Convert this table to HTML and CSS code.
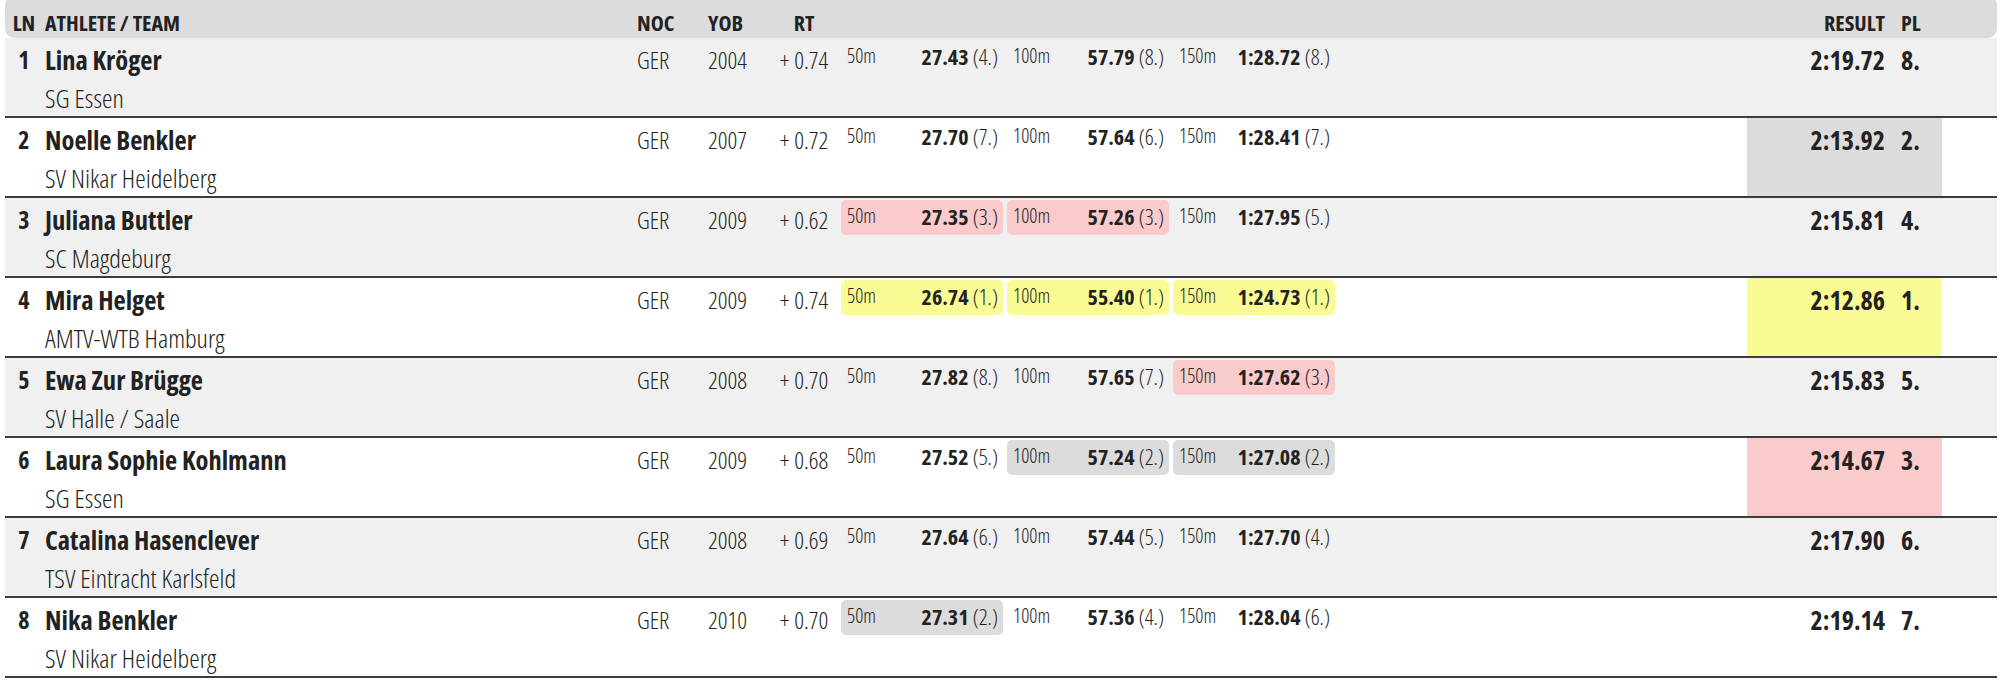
FILE: index.html
```html
<!DOCTYPE html>
<html lang="en">
<head>
    <meta charset="UTF-8">
    <meta name="viewport" content="width=device-width, initial-scale=1.0">
    <title>200m Results</title>
    <link rel="stylesheet" href="styles.css">
</head>
<body>
<div class="results">
    <div class="row head">
        <div class="ln">LN</div>
        <div class="athlete">ATHLETE / TEAM</div>
        <div class="noc">NOC</div>
        <div class="yob">YOB</div>
        <div class="rt">RT</div>
        <div class="splits"></div>
        <div></div>
        <div class="final"><span class="result">RESULT</span><span class="pl">PL</span></div>
    </div>

    <div class="row odd">
        <div class="ln">1</div>
        <div class="athlete"><div class="name">Lina Kröger</div><div class="team">SG Essen</div></div>
        <div class="noc">GER</div>
        <div class="yob">2004</div>
        <div class="rt">+ 0.74</div>
        <div class="splits">
            <div class="split"><span class="dist">50m</span><span><b>27.43</b> (4.)</span></div>
            <div class="split"><span class="dist">100m</span><span><b>57.79</b> (8.)</span></div>
            <div class="split"><span class="dist">150m</span><span><b>1:28.72</b> (8.)</span></div>
        </div>
        <div></div>
        <div class="final"><span class="result">2:19.72</span><span class="pl">8.</span></div>
    </div>

    <div class="row">
        <div class="ln">2</div>
        <div class="athlete"><div class="name">Noelle Benkler</div><div class="team">SV Nikar Heidelberg</div></div>
        <div class="noc">GER</div>
        <div class="yob">2007</div>
        <div class="rt">+ 0.72</div>
        <div class="splits">
            <div class="split"><span class="dist">50m</span><span><b>27.70</b> (7.)</span></div>
            <div class="split"><span class="dist">100m</span><span><b>57.64</b> (6.)</span></div>
            <div class="split"><span class="dist">150m</span><span><b>1:28.41</b> (7.)</span></div>
        </div>
        <div></div>
        <div class="final silver"><span class="result">2:13.92</span><span class="pl">2.</span></div>
    </div>

    <div class="row odd">
        <div class="ln">3</div>
        <div class="athlete"><div class="name">Juliana Buttler</div><div class="team">SC Magdeburg</div></div>
        <div class="noc">GER</div>
        <div class="yob">2009</div>
        <div class="rt">+ 0.62</div>
        <div class="splits">
            <div class="split bronze"><span class="dist">50m</span><span><b>27.35</b> (3.)</span></div>
            <div class="split bronze"><span class="dist">100m</span><span><b>57.26</b> (3.)</span></div>
            <div class="split"><span class="dist">150m</span><span><b>1:27.95</b> (5.)</span></div>
        </div>
        <div></div>
        <div class="final"><span class="result">2:15.81</span><span class="pl">4.</span></div>
    </div>

    <div class="row">
        <div class="ln">4</div>
        <div class="athlete"><div class="name">Mira Helget</div><div class="team">AMTV-WTB Hamburg</div></div>
        <div class="noc">GER</div>
        <div class="yob">2009</div>
        <div class="rt">+ 0.74</div>
        <div class="splits">
            <div class="split gold"><span class="dist">50m</span><span><b>26.74</b> (1.)</span></div>
            <div class="split gold"><span class="dist">100m</span><span><b>55.40</b> (1.)</span></div>
            <div class="split gold"><span class="dist">150m</span><span><b>1:24.73</b> (1.)</span></div>
        </div>
        <div></div>
        <div class="final gold"><span class="result">2:12.86</span><span class="pl">1.</span></div>
    </div>

    <div class="row odd">
        <div class="ln">5</div>
        <div class="athlete"><div class="name">Ewa Zur Brügge</div><div class="team">SV Halle / Saale</div></div>
        <div class="noc">GER</div>
        <div class="yob">2008</div>
        <div class="rt">+ 0.70</div>
        <div class="splits">
            <div class="split"><span class="dist">50m</span><span><b>27.82</b> (8.)</span></div>
            <div class="split"><span class="dist">100m</span><span><b>57.65</b> (7.)</span></div>
            <div class="split bronze"><span class="dist">150m</span><span><b>1:27.62</b> (3.)</span></div>
        </div>
        <div></div>
        <div class="final"><span class="result">2:15.83</span><span class="pl">5.</span></div>
    </div>

    <div class="row">
        <div class="ln">6</div>
        <div class="athlete"><div class="name">Laura Sophie Kohlmann</div><div class="team">SG Essen</div></div>
        <div class="noc">GER</div>
        <div class="yob">2009</div>
        <div class="rt">+ 0.68</div>
        <div class="splits">
            <div class="split"><span class="dist">50m</span><span><b>27.52</b> (5.)</span></div>
            <div class="split silver"><span class="dist">100m</span><span><b>57.24</b> (2.)</span></div>
            <div class="split silver"><span class="dist">150m</span><span><b>1:27.08</b> (2.)</span></div>
        </div>
        <div></div>
        <div class="final bronze"><span class="result">2:14.67</span><span class="pl">3.</span></div>
    </div>

    <div class="row odd">
        <div class="ln">7</div>
        <div class="athlete"><div class="name">Catalina Hasenclever</div><div class="team">TSV Eintracht Karlsfeld</div></div>
        <div class="noc">GER</div>
        <div class="yob">2008</div>
        <div class="rt">+ 0.69</div>
        <div class="splits">
            <div class="split"><span class="dist">50m</span><span><b>27.64</b> (6.)</span></div>
            <div class="split"><span class="dist">100m</span><span><b>57.44</b> (5.)</span></div>
            <div class="split"><span class="dist">150m</span><span><b>1:27.70</b> (4.)</span></div>
        </div>
        <div></div>
        <div class="final"><span class="result">2:17.90</span><span class="pl">6.</span></div>
    </div>

    <div class="row">
        <div class="ln">8</div>
        <div class="athlete"><div class="name">Nika Benkler</div><div class="team">SV Nikar Heidelberg</div></div>
        <div class="noc">GER</div>
        <div class="yob">2010</div>
        <div class="rt">+ 0.70</div>
        <div class="splits">
            <div class="split silver"><span class="dist">50m</span><span><b>27.31</b> (2.)</span></div>
            <div class="split"><span class="dist">100m</span><span><b>57.36</b> (4.)</span></div>
            <div class="split"><span class="dist">150m</span><span><b>1:28.04</b> (6.)</span></div>
        </div>
        <div></div>
        <div class="final"><span class="result">2:19.14</span><span class="pl">7.</span></div>
    </div>
</div>
</body>
</html>
```
FILE: styles.css
```css
html, body {
    margin: 0;
    padding: 0;
    background-color: white;
    font-family: "Open Sans", sans-serif;
    font-stretch: 75%;
    color: #222;
}

.results {
    padding: 0 3px 0 5px;
}

.row {
    display: grid;
    grid-template-columns: 38px 594px 71px 68px 65px 495px 1fr 195px 55px;
    height: 78px;
    border-bottom: 2px solid #3c3c3c;
    font-size: 24px;
    font-weight: 300;
    line-height: 32px;
}

.row.odd {
    background-color: #f0f0f0;
}

.row > div {
    padding-top: 6px;
}

/* header, top edge sits just above the window */
.row.head {
    height: 42px;
    margin-top: -4px;
    border-bottom: none;
    border-radius: 9px;
    background-color: #dcdcdc;
    font-size: 22px;
    font-weight: 700;
}

.row.head > div {
    padding-top: 10px;
}

.ln {
    text-align: center;
    font-weight: 700;
}

.athlete {
    padding-left: 2px;
}

.name {
    font-size: 26.5px;
    font-weight: 700;
}

.team {
    margin-top: 6px;
    font-size: 26.5px;
}

.rt {
    padding-right: 9px;
    text-align: center;
}

.row > .splits {
    display: flex;
    gap: 4px;
    padding-top: 2px;
}

.split {
    display: flex;
    justify-content: space-between;
    align-items: center;
    box-sizing: border-box;
    width: 162px;
    height: 35px;
    padding: 0 5px 3px 6px;
    border-radius: 5px;
    font-size: 22px;
}

.split .dist {
    font-size: 20px;
}

.split b {
    font-weight: 700;
}

.final {
    display: flex;
    font-weight: 700;
    font-size: 26px;
}

.result {
    width: 138px;
    text-align: right;
}

.pl {
    margin-left: 16px;
}

.head .final {
    font-size: 22px;
}

.gold {
    background-color: #fbfb96;
}

.silver {
    background-color: #dcdcdc;
}

.bronze {
    background-color: #fbcaca;
}
```
